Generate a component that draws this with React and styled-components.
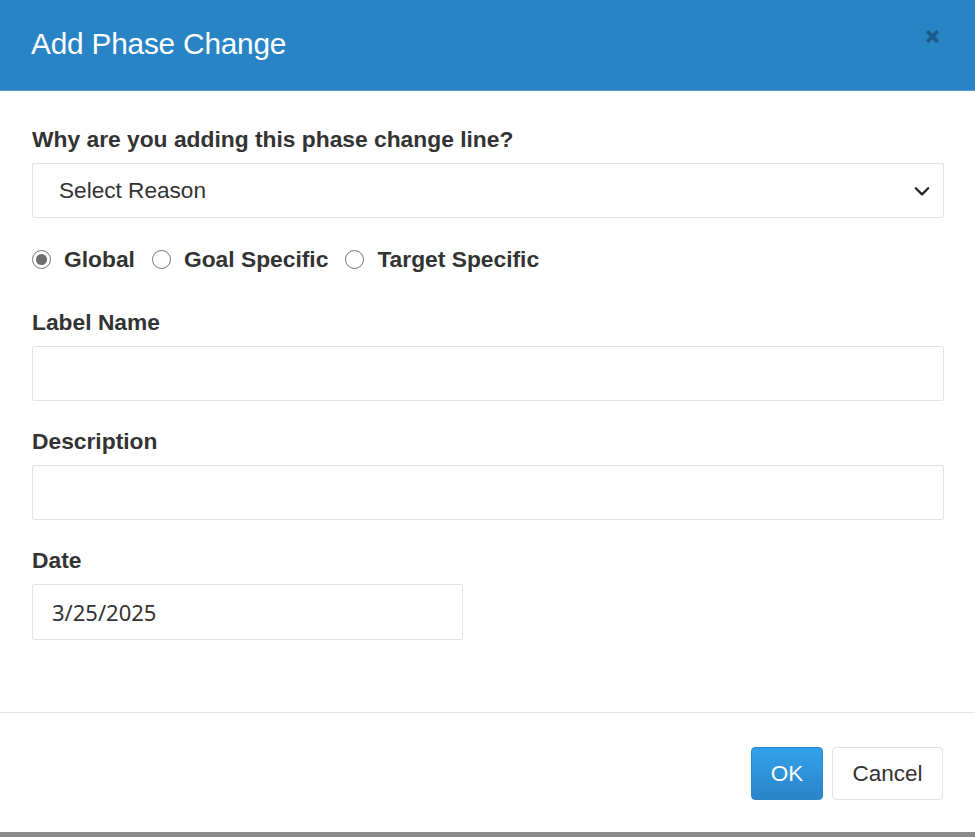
import styled, { createGlobalStyle } from "styled-components";

const GlobalStyle = createGlobalStyle`
  html, body {
    margin: 0;
    padding: 0;
    background: #8c8c8c;
  }
  * {
    box-sizing: border-box;
  }
`;

const Modal = styled.div`
  width: 975px;
  height: 832px;
  background: #fff;
  display: flex;
  flex-direction: column;
  font-family: "Liberation Sans", Arial, sans-serif;
  color: #333;
`;

const Header = styled.div`
  height: 91px;
  background: #2984c6;
  border-bottom: 1px solid #5aa2d6;
  display: flex;
  align-items: center;
  justify-content: space-between;
  padding: 0 34px 2px 31px;
`;

const Title = styled.h4`
  margin: 0;
  font-size: 29.8px;
  font-weight: 400;
  color: #fff;
  letter-spacing: -0.2px;
`;

const Close = styled.button`
  border: none;
  background: transparent;
  padding: 0;
  margin-top: -16px;
  width: 18px;
  height: 18px;
  display: flex;
  align-items: center;
  justify-content: center;
  cursor: pointer;
  opacity: 0.3;
`;

const Body = styled.div`
  flex: 1;
  padding: 35px 31px 0 32px;
  display: flex;
  flex-direction: column;
`;

const Label = styled.label`
  display: block;
  font-size: 22.8px;
  font-weight: 700;
  line-height: 26px;
  margin-bottom: 11px;
`;

const Group = styled.div`
  margin-bottom: ${({ space }) => space}px;
`;

const SelectBox = styled.div`
  height: 55px;
  border: 1px solid #e3e3e3;
  border-radius: 2px;
  display: flex;
  align-items: center;
  justify-content: space-between;
  padding: 0 12px 0 26px;
  font-size: 22.6px;
`;

const Input = styled.input`
  display: block;
  width: ${({ narrow }) => (narrow ? "431px" : "100%")};
  height: ${({ tall }) => (tall ? 56 : 55)}px;
  border: 1px solid #e3e3e3;
  border-radius: 2px;
  padding: 0 19px;
  font-size: 22px;
  font-family: "Noto Sans", "Open Sans", sans-serif;
  color: #333;
  outline: none;
`;

const RadioRow = styled.div`
  display: flex;
  align-items: center;
  height: 26px;
`;

const RadioOption = styled.label`
  display: flex;
  align-items: center;
  margin-right: 17px;
  font-size: 22.8px;
  font-weight: 700;
`;

const RadioDot = styled.span`
  width: 19px;
  height: 19px;
  border-radius: 50%;
  border: 1.5px solid #777;
  margin-right: 13px;
  display: flex;
  align-items: center;
  justify-content: center;
  &::after {
    content: "";
    width: 11px;
    height: 11px;
    border-radius: 50%;
    background: ${({ checked }) => (checked ? "#6e6e6e" : "transparent")};
  }
`;

const Footer = styled.div`
  border-top: 1px solid #e5e5e5;
  padding: 34px 32px 32px;
  display: flex;
  justify-content: flex-end;
  gap: 9px;
`;

const Button = styled.button`
  height: 53px;
  width: ${({ primary }) => (primary ? 72 : 111)}px;
  padding: 0;
  font-size: 22.5px;
  font-family: "Liberation Sans", Arial, sans-serif;
  border-radius: 4px;
  cursor: pointer;
  color: ${({ primary }) => (primary ? "#fff" : "#333")};
  background: ${({ primary }) =>
    primary ? "linear-gradient(#32a2ea, #2a84c8)" : "#fff"};
  border: 1px solid ${({ primary }) => (primary ? "#2a86cb" : "#e2e2e2")};
`;

const Chevron = () => (
  <svg width="18" height="18" viewBox="0 0 16 16">
    <path
      d="M2.5 5.5 8 11l5.5-5.5"
      fill="none"
      stroke="#222"
      strokeWidth="2"
      strokeLinecap="round"
      strokeLinejoin="round"
    />
  </svg>
);

const CloseIcon = () => (
  <svg width="15" height="15" viewBox="0 0 14 14">
    <path d="M2 2l10 10M12 2L2 12" stroke="#000" strokeWidth="3.4" />
  </svg>
);

const scopes = [
  { label: "Global", checked: true },
  { label: "Goal Specific" },
  { label: "Target Specific" },
];

const App = () => (
  <>
    <GlobalStyle />
    <Modal>
      <Header>
        <Title>Add Phase Change</Title>
        <Close aria-label="Close">
          <CloseIcon />
        </Close>
      </Header>
      <Body>
        <Group space={28}>
          <Label>Why are you adding this phase change line?</Label>
          <SelectBox>
            <span>Select Reason</span>
            <Chevron />
          </SelectBox>
        </Group>
        <Group space={37}>
          <RadioRow>
            {scopes.map((s) => (
              <RadioOption key={s.label}>
                <RadioDot checked={s.checked} />
                {s.label}
              </RadioOption>
            ))}
          </RadioRow>
        </Group>
        <Group space={27}>
          <Label>Label Name</Label>
          <Input type="text" />
        </Group>
        <Group space={27}>
          <Label>Description</Label>
          <Input type="text" />
        </Group>
        <Group space={0}>
          <Label>Date</Label>
          <Input type="text" narrow tall defaultValue="3/25/2025" />
        </Group>
      </Body>
      <Footer>
        <Button primary>OK</Button>
        <Button>Cancel</Button>
      </Footer>
    </Modal>
  </>
);

export default App;
